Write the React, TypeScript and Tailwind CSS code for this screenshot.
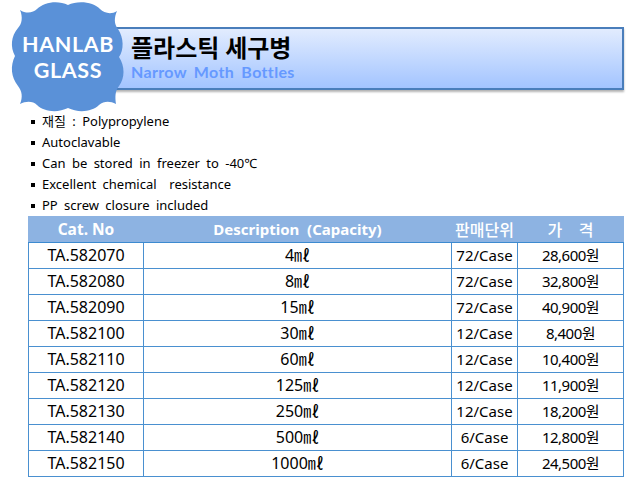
const features = [
  '재질 : Polypropylene',
  'Autoclavable',
  'Can be stored in freezer to -40℃',
  'Excellent chemical  resistance',
  'PP screw closure included',
];

const rows = [
  ['TA.582070', '4㎖', '72/Case', '28,600원'],
  ['TA.582080', '8㎖', '72/Case', '32,800원'],
  ['TA.582090', '15㎖', '72/Case', '40,900원'],
  ['TA.582100', '30㎖', '12/Case', '8,400원'],
  ['TA.582110', '60㎖', '12/Case', '10,400원'],
  ['TA.582120', '125㎖', '12/Case', '11,900원'],
  ['TA.582130', '250㎖', '12/Case', '18,200원'],
  ['TA.582140', '500㎖', '6/Case', '12,800원'],
  ['TA.582150', '1000㎖', '6/Case', '24,500원'],
];

const cellText = ['text-[16px]', 'text-[16px]', 'text-[15px]', 'text-[15px] tracking-[-0.5px]'];

function Badge() {
  return (
    <div className="absolute left-[10px] top-0 h-[114px] w-[116px]">
      <svg width="116" height="114" viewBox="10 0 116 114" className="absolute inset-0">
        <path
          fill="#5a91d8"
          d="M20 10 C26 14 33 13 37 9 C44 2 58 0 68 5 C78 0 94 2 100 9 C104 13 111 15 117 11 C114 18 114 24 118 29 C124 38 124 50 119 57 C125 66 125 78 119 86 C115 91 115 97 116 104 C110 101 104 101 99 105 C92 112 78 113 68 108 C58 113 44 112 37 105 C33 101 26 101 20 104 C23 97 22 91 18 86 C11 77 10 66 15 56 C10 47 11 36 18 28 C22 24 23 17 20 10 Z"
        />
      </svg>
      <div className="relative flex h-full flex-col items-center justify-center text-[21.5px] font-bold leading-[26px] tracking-[0.6px] text-white [font-family:'Lato',sans-serif]">
        <span>HANLAB</span>
        <span>GLASS</span>
      </div>
    </div>
  );
}

export default function App() {
  return (
    <div className="relative h-[482px] w-[644px] overflow-hidden bg-white pt-[27px] [font-family:'Noto_Sans','Noto_Sans_CJK_KR',sans-serif]">
      <div className="ml-[100px] h-[63px] w-[524px] border-2 border-[#4a7ebb] bg-gradient-to-b from-[#e2ecfe] to-[#a3c4ff] pl-[29px] pt-[4px] shadow-[0_2px_2px_rgba(0,0,0,0.3)]">
        <div className="text-[24px] font-bold leading-[30px] text-black [font-family:'Lato','Noto_Sans_CJK_KR',sans-serif]">플라스틱 세구병</div>
        <div className="whitespace-pre text-[16px] font-bold leading-[18px] tracking-[0.35px] text-[#6699ff] [font-family:'Lato',sans-serif] [word-spacing:3px]">Narrow Moth Bottles</div>
      </div>
      <Badge />

      <ul className="ml-[31px] mt-[21px] text-[13px] leading-[21px] text-black">
        {features.map((f) => (
          <li key={f} className="flex items-center whitespace-pre [word-spacing:3px]">
            <span className="mr-[7px] h-[4px] w-[4px] bg-black" />
            {f}
          </li>
        ))}
      </ul>

      <table className="ml-[28px] w-[595px] table-fixed border-collapse text-center text-black">
        <colgroup>
          <col className="w-[115px]" />
          <col className="w-[308px]" />
          <col className="w-[66px]" />
          <col className="w-[106px]" />
        </colgroup>
        <thead>
          <tr className="h-[26px] bg-[#8db3e2] text-white">
            <th className="border border-[#8db3e2] border-b-[#3c8ad0] text-[15.5px] font-bold">Cat. No</th>
            <th className="whitespace-pre border border-[#8db3e2] border-b-[#3c8ad0] text-[15px] font-bold">Description  (Capacity)</th>
            <th className="border border-[#8db3e2] border-b-[#3c8ad0] text-[16px] font-medium">판매단위</th>
            <th className="whitespace-pre border border-[#8db3e2] border-b-[#3c8ad0] text-[16px] font-medium">가    격</th>
          </tr>
        </thead>
        <tbody>
          {rows.map((r) => (
            <tr key={r[0]} className="h-[26px]">
              {r.map((c, i) => (
                <td key={c} className={`border border-[#4a90d0] p-0 leading-[25px] ${cellText[i]}`}>{c}</td>
              ))}
            </tr>
          ))}
        </tbody>
      </table>
    </div>
  );
}
